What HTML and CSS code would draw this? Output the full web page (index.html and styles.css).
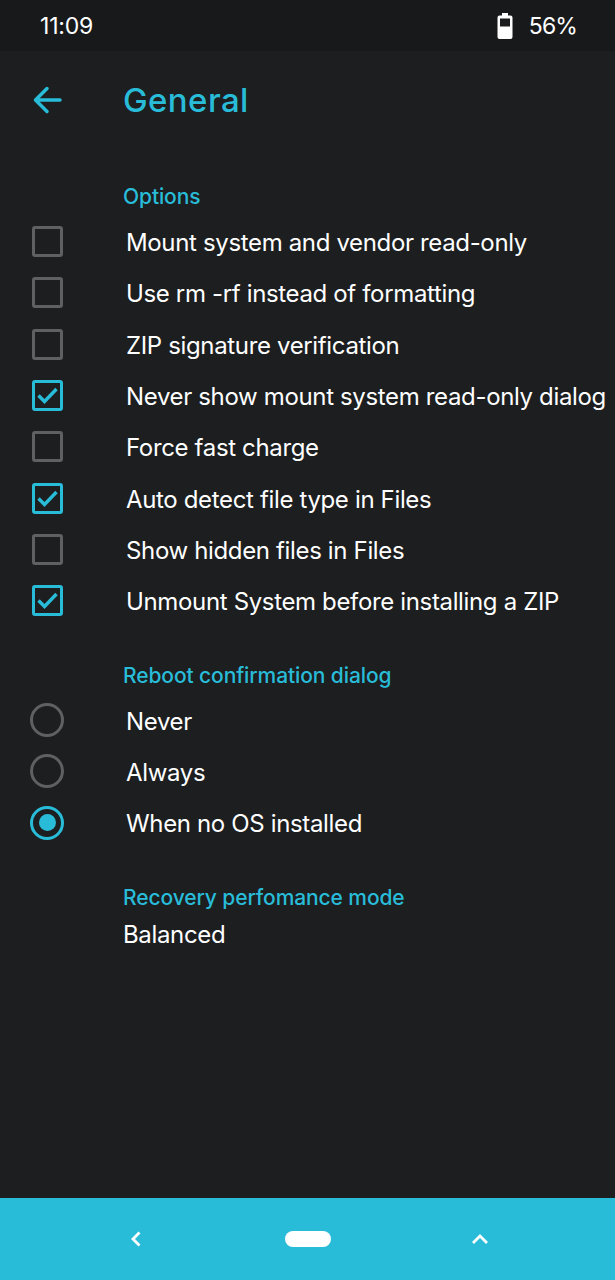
FILE: index.html
```html
<!DOCTYPE html>
<html lang="en">
<head>
<meta charset="utf-8">
<title>General</title>
<link rel="stylesheet" href="styles.css">
</head>
<body>
<div class="screen">
  <header class="status">
    <span class="time">11:09</span>
    <span class="battery">
      <svg class="battery-icon" width="16" height="26" viewBox="0 0 16 26"><path fill="#fff" d="M5 0h6v2.500h2.500a2 2 0 0 1 2 2V24a2 2 0 0 1-2 2h-11a2 2 0 0 1-2-2V4.500a2 2 0 0 1 2-2H5z"/><rect x="3" y="5.500" width="10" height="8" fill="#1a1b1d"/></svg>
      <span class="percent">56%</span>
    </span>
  </header>
  <div class="appbar">
    <svg class="back" width="30" height="30" viewBox="0 0 30 30"><path d="M27 15H4M14 3.500 2.500 15 14 26.500" fill="none" stroke="#29bcd8" stroke-width="3.500" stroke-linecap="round" stroke-linejoin="round"/></svg>
    <h1 class="title">General</h1>
  </div>
  <main class="content">
    <section class="group group-options">
      <h2 class="heading">Options</h2>
      <ul class="list">
        <li class="row"><span class="check"></span><span class="label">Mount system and vendor read-only</span></li>
        <li class="row"><span class="check"></span><span class="label">Use rm -rf instead of formatting</span></li>
        <li class="row"><span class="check"></span><span class="label">ZIP signature verification</span></li>
        <li class="row"><span class="check on"><svg width="21" height="17" viewBox="0 0 21 17"><path d="M1.500 8.500 7.500 14.500 19.500 2" fill="none" stroke="#29bcd8" stroke-width="3.400"/></svg></span><span class="label">Never show mount system read-only dialog</span></li>
        <li class="row"><span class="check"></span><span class="label">Force fast charge</span></li>
        <li class="row"><span class="check on"><svg width="21" height="17" viewBox="0 0 21 17"><path d="M1.500 8.500 7.500 14.500 19.500 2" fill="none" stroke="#29bcd8" stroke-width="3.400"/></svg></span><span class="label">Auto detect file type in Files</span></li>
        <li class="row"><span class="check"></span><span class="label">Show hidden files in Files</span></li>
        <li class="row"><span class="check on"><svg width="21" height="17" viewBox="0 0 21 17"><path d="M1.500 8.500 7.500 14.500 19.500 2" fill="none" stroke="#29bcd8" stroke-width="3.400"/></svg></span><span class="label">Unmount System before installing a ZIP</span></li>
      </ul>
    </section>
    <section class="group group-reboot">
      <h2 class="heading">Reboot confirmation dialog</h2>
      <ul class="list">
        <li class="row"><span class="radio"></span><span class="label">Never</span></li>
        <li class="row"><span class="radio"></span><span class="label">Always</span></li>
        <li class="row"><span class="radio on"></span><span class="label">When no OS installed</span></li>
      </ul>
    </section>
    <section class="group group-perf">
      <h2 class="heading">Recovery perfomance mode</h2>
      <p class="value">Balanced</p>
    </section>
  </main>
  <nav class="navbar">
    <svg width="12" height="16" viewBox="0 0 12 16"><path d="M9.500 1.500 3 8l6.500 6.500" fill="none" stroke="#fff" stroke-width="2.800"/></svg>
    <span class="pill"></span>
    <svg width="18" height="12" viewBox="0 0 18 12"><path d="M2 10 9 3l7 7" fill="none" stroke="#fff" stroke-width="2.800"/></svg>
  </nav>
</div>
</body>
</html>
```

FILE: styles.css
```css
* { box-sizing: border-box; }
html, body { margin: 0; padding: 0; }
body { background: #1c1e20; font-family: Inter, "Liberation Sans", sans-serif; color: #fff; }
.screen { width: 615px; height: 1280px; display: flex; flex-direction: column; overflow: hidden; background: #1c1e20; }
.status { height: 51px; flex: none; background: #18191b; display: flex; align-items: center; justify-content: space-between; padding: 0 38px 0 40px; font-size: 23px; }
.time { letter-spacing: -0.2px; }
.percent { letter-spacing: -0.9px; }
.battery { display: flex; align-items: center; gap: 16px; }
.battery-icon { display: block; }
.appbar { height: 97px; flex: none; display: flex; align-items: center; padding-left: 33px; }
.back { display: block; margin-right: 60px; }
.title { margin: 0; font-size: 33px; font-weight: 500; color: #29bcd8; letter-spacing: 0.4px; }
.content { flex: 1; padding-left: 30px; }
.group-options { padding-top: 34px; }
.group-options .list { padding-top: 1px; }
.group-reboot { padding-top: 34px; }
.group-perf { padding-top: 34px; }
.heading { margin: 0 0 4px 93px; height: 30px; line-height: 30px; font-size: 21px; font-weight: 500; color: #29bcd8; letter-spacing: -0.1px; }
.list { list-style: none; margin: 0; padding: 0; }
.row { height: 51.300px; display: flex; align-items: center; }
.check { width: 31px; height: 31px; margin: -2px 1.500px 0; flex: none; display: flex; align-items: center; justify-content: center; border: 3px solid #5f6062; border-radius: 3px; }
.check.on { border-color: #29bcd8; }
.radio { width: 34px; height: 34px; flex: none; border: 3px solid #5f6062; border-radius: 50%; position: relative; top: -1px; }
.radio.on { border-color: #29bcd8; display: flex; align-items: center; justify-content: center; }
.radio.on::after { content: ""; width: 17px; height: 17px; border-radius: 50%; background: #29bcd8; }
.label { margin-left: 62px; font-size: 24px; letter-spacing: -0.35px; white-space: nowrap; }
.value { margin: 0 0 0 93px; font-size: 24px; letter-spacing: -0.35px; line-height: 36px; }
.navbar { height: 82px; flex: none; background: #29bcd8; display: flex; align-items: center; justify-content: space-between; padding: 0 126px 0 130px; }
.pill { width: 46px; height: 16px; border-radius: 8px; background: #fff; position: relative; left: 1px; }
```
